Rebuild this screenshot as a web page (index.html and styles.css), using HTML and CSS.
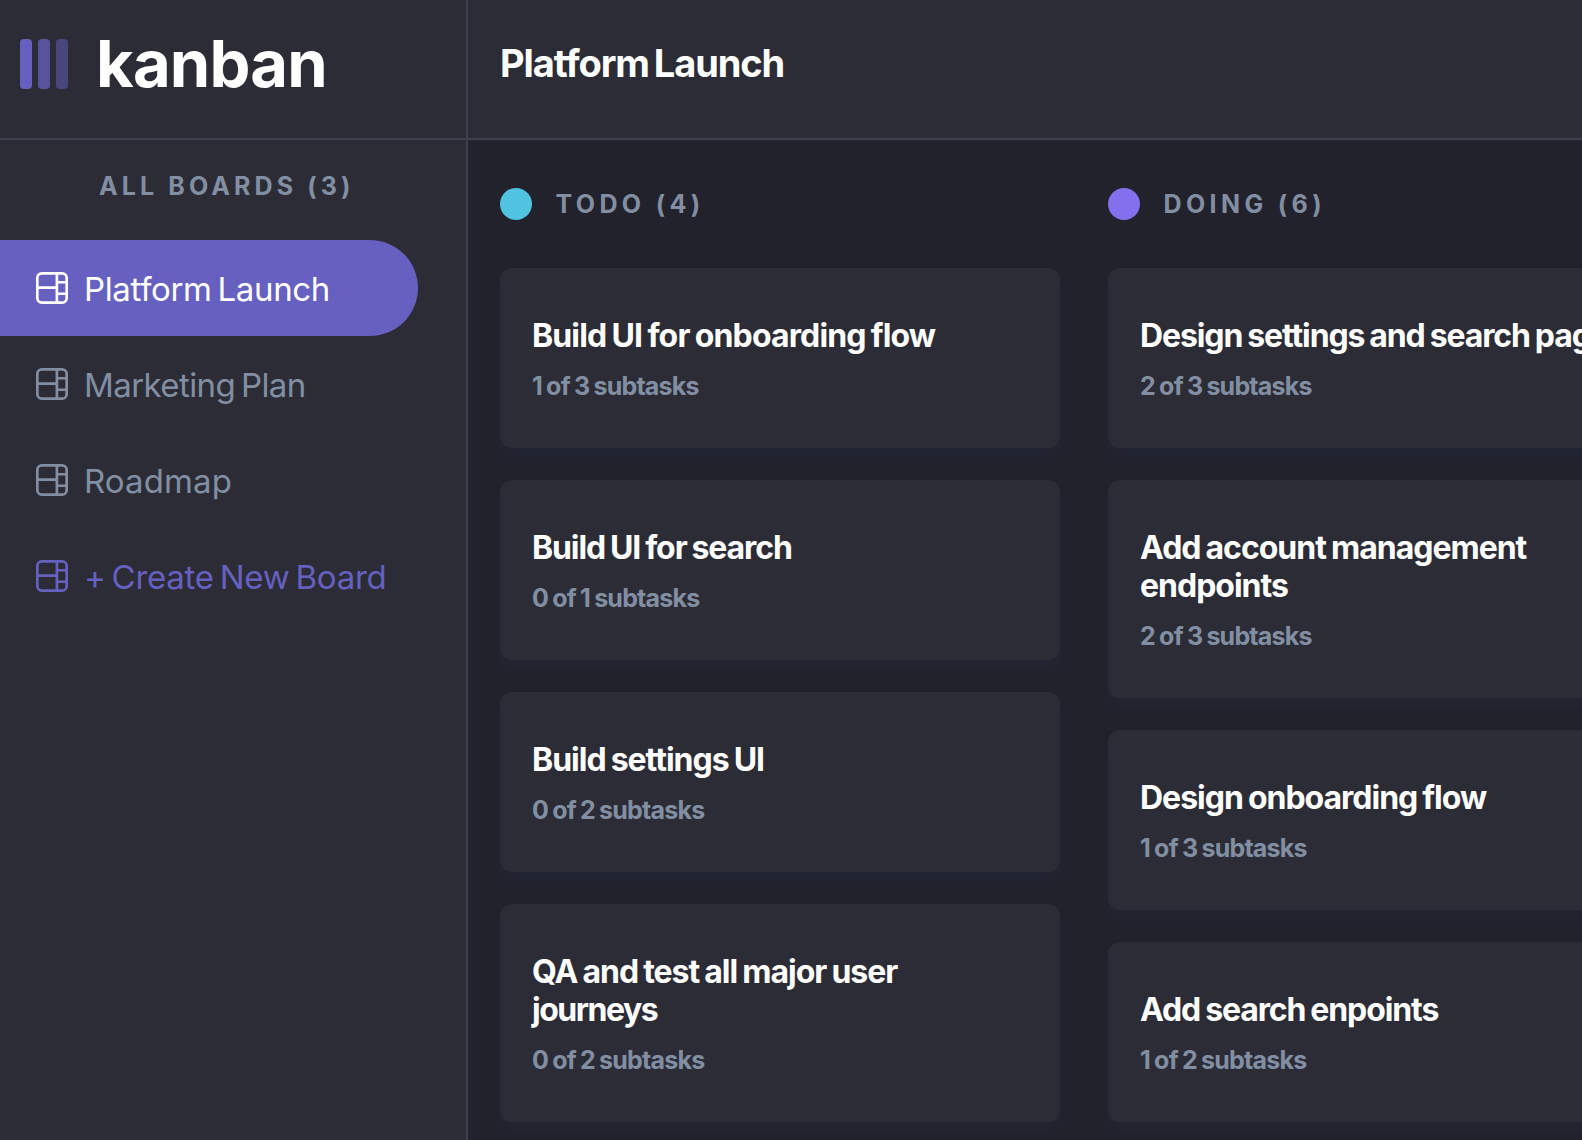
FILE: index.html
```html
<!DOCTYPE html>
<html lang="en">
<head>
<meta charset="utf-8">
<title>Kanban</title>
<link rel="stylesheet" href="styles.css">
</head>
<body>
<svg class="sprite" width="0" height="0" aria-hidden="true">
  <symbol id="board" viewBox="0 0 16 16"><path d="M0 2.889A2.889 2.889 0 0 1 2.889 0H13.11A2.889 2.889 0 0 1 16 2.889V13.11A2.888 2.888 0 0 1 13.111 16H2.89A2.889 2.889 0 0 1 0 13.111V2.89Zm1.333 5.555v4.667c0 .859.697 1.556 1.556 1.556h6.889V8.444H1.333Zm8.445-1.333V1.333h-6.89A1.556 1.556 0 0 0 1.334 2.89V7.11h8.445Zm4.889-1.333H11.11v4.444h3.556V5.778Zm0 5.778H11.11v3.11h2a1.556 1.556 0 0 0 1.556-1.555v-1.555Zm0-7.112V2.89a1.555 1.555 0 0 0-1.556-1.556h-2v3.111h3.556Z"/></symbol>
</svg>
<div class="app">
  <aside class="sidebar">
    <div class="brand">
      <div class="bars"><i></i><i></i><i></i></div>
      <span class="wordmark">kanban</span>
    </div>
    <h2 class="boards-title">ALL BOARDS (3)</h2>
    <nav class="boards">
      <a class="board active"><svg><use href="#board"/></svg><span>Platform Launch</span></a>
      <a class="board snug"><svg><use href="#board"/></svg><span>Marketing Plan</span></a>
      <a class="board open"><svg><use href="#board"/></svg><span>Roadmap</span></a>
      <a class="board create"><svg><use href="#board"/></svg><span>+ Create New Board</span></a>
    </nav>
  </aside>
  <div class="main">
    <header class="topbar"><h1>Platform Launch</h1></header>
    <main class="columns">
      <section class="column">
        <h2 class="column-title"><i class="dot todo"></i><span>TODO (4)</span></h2>
        <article class="card"><h3 class="loose">Build UI for onboarding flow</h3><p>1 of 3 subtasks</p></article>
        <article class="card"><h3 class="tight">Build UI for search</h3><p>0 of 1 subtasks</p></article>
        <article class="card"><h3>Build settings UI</h3><p>0 of 2 subtasks</p></article>
        <article class="card"><h3>QA and test all major user<br><span class="tightest">journeys</span></h3><p>0 of 2 subtasks</p></article>
      </section>
      <section class="column">
        <h2 class="column-title"><i class="dot doing"></i><span>DOING (6)</span></h2>
        <article class="card"><h3 class="tight">Design settings and search pages</h3><p>2 of 3 subtasks</p></article>
        <article class="card"><h3>Add account management<br>endpoints</h3><p>2 of 3 subtasks</p></article>
        <article class="card"><h3>Design onboarding flow</h3><p>1 of 3 subtasks</p></article>
        <article class="card"><h3 class="tight">Add search enpoints</h3><p>1 of 2 subtasks</p></article>
      </section>
    </main>
  </div>
</div>
</body>
</html>
```
FILE: styles.css
```css
* { box-sizing: border-box; margin: 0; padding: 0; }
body { background: #22222c; color: #fff; font-family: Inter, "Noto Sans", sans-serif; overflow: hidden; }
.sprite { display: none; }
.app { display: flex; height: 1140px; overflow: hidden; }
.sidebar { flex: 0 0 468px; background: #2c2c36; border-right: 2px solid #3e3e4c; }
.brand { display: flex; align-items: flex-start; gap: 28px; height: 140px; padding: 39px 0 0 20px; border-bottom: 2px solid #3e3e4c; }
.bars { display: flex; gap: 6px; }
.bars i { width: 12px; height: 50px; border-radius: 4px; background: #6660c0; }
.bars i:nth-child(2) { opacity: .75; }
.bars i:nth-child(3) { opacity: .5; }
.wordmark { font-size: 65px; font-weight: 700; line-height: 49px; letter-spacing: -.8px; }
.boards-title { padding: 31px 0 0 99px; font-size: 25px; font-weight: 700; line-height: 30px; letter-spacing: 4.1px; color: #828fa3; white-space: nowrap; }
.boards { padding-top: 39px; }
.board { display: flex; align-items: center; gap: 16px; width: 418px; height: 96px; padding-left: 36px; border-radius: 0 48px 48px 0; color: #828fa3; font-size: 33px; letter-spacing: -.36px; word-spacing: -3px; white-space: nowrap; }
.board svg { width: 32px; height: 32px; fill: currentColor; }
.board span { padding-top: 2px; }
.board.snug { letter-spacing: -.58px; }
.board.open { letter-spacing: .1px; }
.board.active { background: #6660c0; color: #fff; }
.board.create { color: #6660c0; letter-spacing: -.27px; }
.main { flex: 1; min-width: 0; }
.topbar { height: 140px; padding: 40px 32px 0; background: #2c2c36; border-bottom: 2px solid #3e3e4c; }
.topbar h1 { font-size: 38px; font-weight: 700; line-height: 46px; letter-spacing: -1.1px; word-spacing: -3px; }
.columns { display: flex; gap: 48px; padding: 48px 32px 0; }
.column { flex: 0 0 560px; display: flex; flex-direction: column; gap: 32px; }
.column-title { display: flex; align-items: center; gap: 23.6px; height: 32px; margin-bottom: 16px; font-size: 25px; line-height: 32px; font-weight: 700; letter-spacing: 4.35px; color: #828fa3; }
.dot { width: 32px; height: 32px; border-radius: 50%; }
.todo { background: #50c3e0; }
.doing { background: #8470ec; }
.card { padding: 49px 32px 47px; border-radius: 12px; background: #2c2c36; box-shadow: 0 8px 12px rgba(33, 52, 80, .2); }
.card h3 { font-size: 32px; font-weight: 700; line-height: 38px; letter-spacing: -1.01px; word-spacing: -1.5px; white-space: nowrap; }
.card .loose { letter-spacing: -.86px; }
.card .tight { letter-spacing: -1.11px; }
.card .tightest { letter-spacing: -1.5px; }
.card p { margin-top: 16px; font-size: 25px; font-weight: 700; line-height: 30px; letter-spacing: -.79px; word-spacing: -1px; color: #828fa3; }
```
